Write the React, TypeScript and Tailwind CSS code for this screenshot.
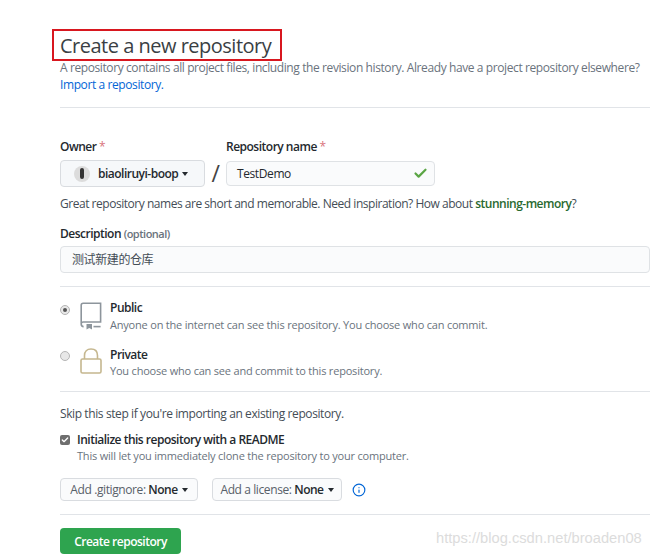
import React from 'react';
import { Check, Info } from 'lucide-react';

const font = { fontFamily: '"Open Sans", "Noto Sans CJK SC", sans-serif' };
const label = 'font-semibold tracking-[-0.5px]';

const Caret = () => (
  <span className="inline-block ml-1 align-middle w-0 h-0 border-x-[3.5px] border-x-transparent border-t-[4px] border-t-[#24292e]" />
);

const RepoIcon = () => (
  <svg width="22" height="28" viewBox="0 0 22 28" fill="none" stroke="#8d959c" strokeWidth="1.6" className="shrink-0">
    <path d="M1.2 22V3.2C1.2 2 2 1.2 3.2 1.2H20.6V20H3.2C2 20 1.2 21 1.2 22C1.2 23.5 2 24.6 3.6 24.6" />
    <path d="M13.5 24.6H20.6" />
    <path d="M6.5 22h5.5v5.5l-2.75-1.6-2.75 1.6z" fill="#8d959c" stroke="none" />
  </svg>
);

const LockIcon = () => (
  <svg width="22" height="26" viewBox="0 0 22 26" fill="none" stroke="#c5b78f" strokeWidth="1.6" className="shrink-0">
    <rect x="1" y="11" width="20" height="14" rx="1.5" />
    <path d="M4.5 11V7.5C4.5 3.5 7 1 11 1s6.5 2.5 6.5 6.5V11" />
  </svg>
);

const Radio = ({ on }: { on?: boolean }) => (
  <span className="w-[10px] h-[10px] rounded-full border border-[#b5b5b5] bg-[#e8e8e8] flex items-center justify-center shrink-0">
    {on && <span className="w-1 h-1 rounded-full bg-[#555]" />}
  </span>
);

export default function App() {
  return (
    <div className="relative w-[650px] h-[555px] overflow-hidden bg-white text-[#24292e] text-[12px] leading-[17px] tracking-[-0.4px]" style={font}>
      <div className="pl-[60px] pt-[29px]">
        {/* Heading with the red marker box */}
        <h1 className="-ml-2 w-[230px] h-[32px] border-2 border-[#d8171f] pl-[6px] flex items-center text-[20px] font-normal tracking-[-0.5px] text-[#3a3f44] whitespace-nowrap">
          Create a new repository
        </h1>
        <p className="mt-[-2px] text-[#6a737d] whitespace-nowrap">
          A repository contains all project files, including the revision history. Already have a project repository elsewhere?
        </p>
        <a className="text-[#0366d6] block">Import a repository.</a>
        <div className="mt-[14px] h-px bg-[#e1e4e8]" />

        {/* Owner / name */}
        <div className="mt-[30px] flex items-start">
          <div className="w-[145px]">
            <div className={`${label} h-[17px]`}>
              Owner <span className="font-normal text-[#d9737b]">*</span>
            </div>
            <div className={`${label} mt-[5px] h-[27px] rounded border border-[#d9dce0] bg-[#f6f8fa] flex items-center pl-[13px] text-[#24292e]`}>
              <span className="w-4 h-4 rounded-full bg-[#dcdcdc] flex items-center justify-center mr-[8px]">
                <span className="w-[4px] h-[11px] rounded-sm bg-[#333]" />
              </span>
              biaoliruyi-boop
              <Caret />
            </div>
          </div>
          <div className="w-[21px] mt-[22px] text-center text-[23px] leading-[27px] text-[#444]">/</div>
          <div>
            <div className={`${label} h-[17px]`}>
              Repository name <span className="font-normal text-[#d9737b]">*</span>
            </div>
            <div className="mt-[6px] w-[209px] h-[25px] rounded border border-[#dfe2e5] bg-[#fafbfc] flex items-center justify-between pl-[10px] pr-[6px]">
              TestDemo
              <Check size={15} strokeWidth={3.5} className="text-[#5aa544]" />
            </div>
          </div>
        </div>

        <p className="mt-[8px] text-[#444d56] whitespace-nowrap tracking-[-0.47px]">
          Great repository names are short and memorable. Need inspiration? How about{' '}
          <span className={`${label} text-[#28692f]`}>stunning-memory</span>?
        </p>

        <div className={`${label} mt-[13px]`}>
          Description <span className="text-[11px] text-[#6a737d]">(optional)</span>
        </div>
        <div className="mt-[4px] w-[590px] h-[27px] rounded border border-[#dfe2e5] bg-[#fafbfc] flex items-center pl-[11px] text-[#444d56]">
          测试新建的仓库
        </div>
        <div className="mt-[13px] h-px bg-[#e1e4e8]" />

        {/* Visibility */}
        <div className="mt-[12px] flex items-start">
          <div className="mt-[6px] mr-[10px]"><Radio on /></div>
          <div className="mr-[8px] mt-[3px]"><RepoIcon /></div>
          <div>
            <div className={label}>Public</div>
            <div className="text-[11px] tracking-[-0.2px] text-[#6a737d]">Anyone on the internet can see this repository. You choose who can commit.</div>
          </div>
        </div>
        <div className="mt-[13px] flex items-start">
          <div className="mt-[5px] mr-[10px]"><Radio /></div>
          <div className="mr-[8px] mt-[2px]"><LockIcon /></div>
          <div>
            <div className={label}>Private</div>
            <div className="-mt-px text-[11px] tracking-[-0.2px] text-[#6a737d]">You choose who can see and commit to this repository.</div>
          </div>
        </div>
        <div className="mt-[12px] h-px bg-[#e1e4e8]" />

        {/* Init */}
        <p className="mt-[13px] text-[#444d56]">Skip this step if you're importing an existing repository.</p>
        <div className={`${label} mt-[9px] flex items-center`}>
          <span className="w-[10px] h-[10px] rounded-[2px] bg-[#6e6e6e] flex items-center justify-center mr-[7px]">
            <Check size={8} strokeWidth={4} className="text-white" />
          </span>
          Initialize this repository with a README
        </div>
        <div className="-mt-px ml-[17px] text-[11px] tracking-[-0.2px] text-[#6a737d]">This will let you immediately clone the repository to your computer.</div>

        <div className="mt-[14px] flex items-center">
          <div className="w-[138px] h-[23px] rounded border border-[#d9dce0] bg-[#fafbfc] flex items-center justify-center text-[#586069]">
            Add .gitignore:&nbsp;<span className={`${label} text-[#24292e]`}>None</span>
            <Caret />
          </div>
          <div className="ml-[14px] w-[130px] h-[23px] rounded border border-[#d9dce0] bg-[#fafbfc] flex items-center justify-center text-[#586069]">
            Add a license:&nbsp;<span className={`${label} text-[#24292e]`}>None</span>
            <Caret />
          </div>
          <Info size={14} strokeWidth={2} className="ml-[10px] text-[#0366d6]" />
        </div>
        <div className="mt-[13px] h-px bg-[#e1e4e8]" />

        <button className={`${label} mt-[13px] w-[121px] h-[26px] rounded bg-[#2ea44f] text-white flex items-center justify-center`}>
          Create repository
        </button>
      </div>

      {/* CSDN watermark */}
      <div className="absolute left-[436px] top-[528px] text-[14.7px] leading-5 tracking-normal text-[#dcdcdc] whitespace-nowrap" style={{ fontFamily: '"Liberation Sans", sans-serif' }}>
        https://blog.csdn.net/broaden08
      </div>
    </div>
  );
}
